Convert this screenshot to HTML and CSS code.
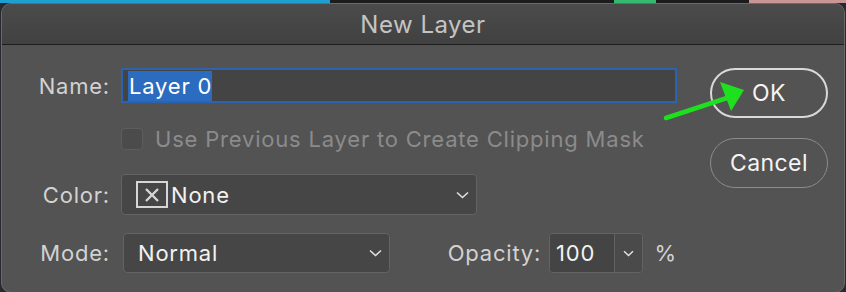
FILE: index.html
```html
<!DOCTYPE html>
<html lang="en">
<head>
  <meta charset="UTF-8">
  <meta name="viewport" content="width=device-width, initial-scale=1.0">
  <title>New Layer</title>
  <link rel="stylesheet" href="styles.css">
</head>
<body>
  <div class="backdrop">
    <span class="seg seg-cyan"></span>
    <span class="seg seg-dark"></span>
    <span class="seg seg-green"></span>
    <span class="seg seg-dark2"></span>
    <span class="seg seg-pink"></span>
  </div>
  <div class="dialog">
    <div class="titlebar">New Layer</div>
    <div class="content">
      <div class="form">
        <div class="row row-name">
          <label class="label" for="name">Name:</label>
          <div class="name-input" id="name"><span class="selected">Layer 0</span></div>
        </div>
        <div class="row row-check">
          <span class="label"></span>
          <span class="checkbox"></span>
          <span class="check-text">Use Previous Layer to Create Clipping Mask</span>
        </div>
        <div class="row row-color">
          <span class="label">Color:</span>
          <div class="select select-color">
            <span class="swatch">
              <svg width="16" height="14" viewBox="0 0 16 14"><path d="M2 1 L14 13 M14 1 L2 13" stroke="#d6d6d6" stroke-width="2.4" fill="none"/></svg>
            </span>
            <span class="value">None</span>
            <svg class="chevron" width="13" height="8" viewBox="0 0 13 8"><path d="M1 1.5 L6.5 6.5 L12 1.5" stroke="#e0e0e0" stroke-width="1.6" fill="none"/></svg>
          </div>
        </div>
        <div class="row row-mode">
          <span class="label">Mode:</span>
          <div class="select select-mode">
            <span class="value">Normal</span>
            <svg class="chevron" width="13" height="8" viewBox="0 0 13 8"><path d="M1 1.5 L6.5 6.5 L12 1.5" stroke="#e0e0e0" stroke-width="1.6" fill="none"/></svg>
          </div>
          <span class="opacity-label">Opacity:</span>
          <div class="opacity-box">
            <span class="opacity-value">100</span>
            <span class="opacity-drop">
              <svg width="11" height="7" viewBox="0 0 11 7"><path d="M1 1.2 L5.5 5.5 L10 1.2" stroke="#e0e0e0" stroke-width="1.5" fill="none"/></svg>
            </span>
          </div>
          <span class="percent">%</span>
        </div>
      </div>
      <div class="buttons">
        <button class="btn btn-ok">OK</button>
        <button class="btn btn-cancel">Cancel</button>
      </div>
    </div>
    <!-- annotation arrow drawn over the dialog -->
    <svg class="pointer" width="100" height="50" viewBox="0 0 100 50">
      <path d="M4 45 L68 24" stroke="#1fe01f" stroke-width="4.5" stroke-linecap="round" fill="none"/>
      <polygon points="82,17 58,9 69,38" fill="#1fe01f"/>
    </svg>
  </div>
</body>
</html>
```

FILE: styles.css
```css
body {
  margin: 0;
  background-color: #262a30;
  font-family: 'Inter', 'Noto Sans', sans-serif;
  overflow: hidden;
}
.backdrop {
  display: flex;
  height: 3px;
}
.seg { display: block; height: 100%; }
.seg-cyan { width: 330px; background-color: #1f9fcf; }
.seg-dark { width: 284px; background-color: #1c1c1c; }
.seg-green { width: 42px; background-color: #35b870; }
.seg-dark2 { width: 93px; background-color: #1c1c1c; }
.seg-pink { flex: 1; background-color: #c99595; }
.dialog {
  position: relative;
  margin: 0 1px;
  height: 290px;
  box-sizing: border-box;
  border: 1px solid #6a6a6a;
  border-radius: 10px;
  background-color: #535353;
  overflow: hidden;
}
.titlebar {
  height: 40px;
  line-height: 41px;
  text-align: center;
  font-size: 24px;
  letter-spacing: 0.5px;
  color: #c4c4c4;
  background: linear-gradient(#4b4b4b, #414141);
  border-bottom: 1px solid #1e1e1e;
}
.content {
  display: flex;
  padding-top: 23px;
}
.form {
  width: 675px;
  display: flex;
  flex-direction: column;
  font-size: 22px;
  letter-spacing: 0.8px;
}
.row {
  display: flex;
  align-items: center;
}
.label {
  width: 108px;
  margin-right: 11px;
  text-align: right;
  color: #d2d2d2;
  flex-shrink: 0;
}
.row-name { height: 35px; margin-bottom: 25px; }
.name-input {
  flex: 1;
  height: 35px;
  box-sizing: border-box;
  border: 2px solid #2d62ad;
  background-color: #444444;
  display: flex;
  align-items: center;
  padding-left: 5px;
}
.selected {
  background-color: #2b6cc0;
  color: #ffffff;
  line-height: 30px;
  padding-left: 1px;
  width: 83px;
  white-space: nowrap;
}
.row-check { height: 22px; margin-bottom: 24px; }
.checkbox {
  width: 22px;
  height: 22px;
  box-sizing: border-box;
  border: 1px solid #5d5d5d;
  border-radius: 4px;
  background-color: #4b4b4b;
  margin-right: 12px;
}
.check-text {
  color: #8b8b8b;
  white-space: nowrap;
}
.row-color { height: 41px; margin-bottom: 18px; }
.select {
  height: 41px;
  box-sizing: border-box;
  border: 1px solid #636363;
  border-radius: 4px;
  background-color: #464646;
  display: flex;
  align-items: center;
}
.select-color {
  width: 356px;
  padding-left: 14px;
}
.swatch {
  width: 32px;
  height: 27px;
  box-sizing: border-box;
  border: 2px solid #d6d6d6;
  display: flex;
  align-items: center;
  justify-content: center;
  margin-right: 3px;
}
.value {
  color: #f2f2f2;
  flex: 1;
}
.chevron { margin-right: 7px; }
.row-mode { height: 40px; }
.select-mode {
  height: 40px;
  width: 268px;
  margin-left: 2px;
  padding-left: 14px;
}
.opacity-label {
  margin-left: 58px;
  width: 102px;
  color: #d2d2d2;
  white-space: nowrap;
}
.opacity-box {
  width: 94px;
  height: 40px;
  box-sizing: border-box;
  border: 1px solid #636363;
  border-radius: 4px;
  display: flex;
  overflow: hidden;
}
.opacity-value {
  width: 65px;
  background-color: #444444;
  border-right: 1px solid #636363;
  color: #f2f2f2;
  line-height: 38px;
  padding-left: 6px;
  box-sizing: border-box;
}
.opacity-drop {
  flex: 1;
  background-color: #4a4a4a;
  display: flex;
  align-items: center;
  justify-content: center;
}
.percent {
  margin-left: 12px;
  color: #d2d2d2;
}
.buttons {
  margin-left: 33px;
  display: flex;
  flex-direction: column;
  gap: 20px;
}
.btn {
  width: 118px;
  height: 50px;
  border-radius: 25px;
  background-color: transparent;
  font-family: 'Inter', 'Noto Sans', sans-serif;
  font-size: 23px;
  letter-spacing: 0.4px;
  color: #f4f4f4;
  box-sizing: border-box;
  padding: 0;
}
.btn-ok {
  border: 2px solid #d9d9d9;
}
.btn-cancel {
  border: 1.5px solid #8c8c8c;
}
.pointer {
  position: absolute;
  left: 660px;
  top: 69px;
}
```
